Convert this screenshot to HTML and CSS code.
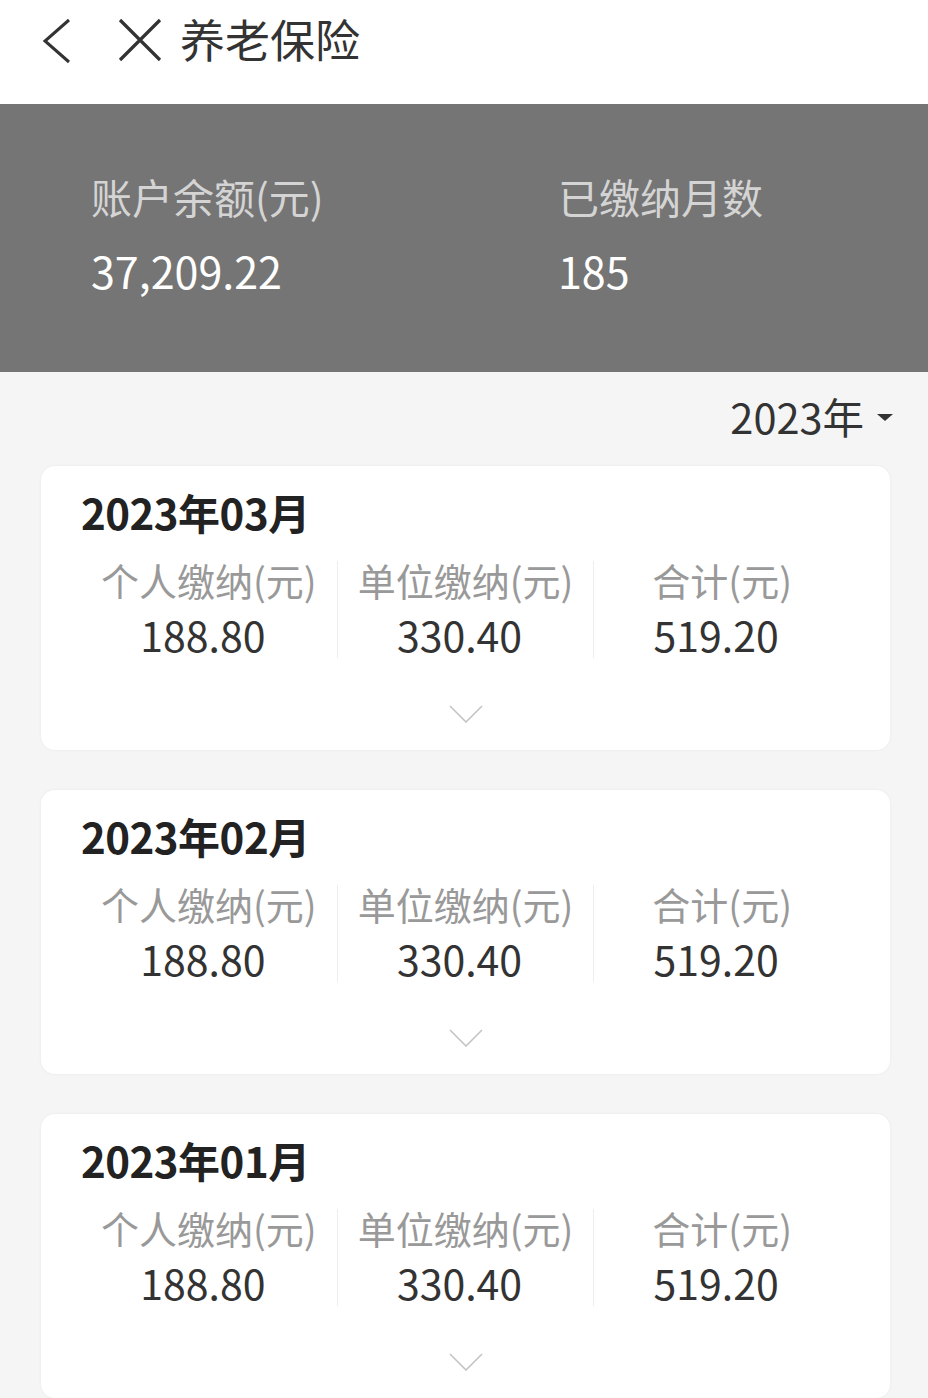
FILE: index.html
```html
<!DOCTYPE html>
<html lang="zh-CN">
<head>
    <meta charset="UTF-8">
    <meta name="viewport" content="width=device-width, initial-scale=1.0">
    <title>养老保险</title>
    <link rel="stylesheet" href="styles.css">
</head>
<body>
    <div class="top-bar">
        <svg class="icon-back" width="30" height="46" viewBox="0 0 30 46">
            <polyline points="27,2 3,23 27,44" fill="none" stroke="#333" stroke-width="3"/>
        </svg>
        <svg class="icon-close" width="44" height="44" viewBox="0 0 44 44">
            <path d="M2 2 L42 42 M42 2 L2 42" fill="none" stroke="#333" stroke-width="3.2"/>
        </svg>
        <div class="page-title">养老保险</div>
    </div>

    <div class="summary">
        <div class="summary-item summary-balance">
            <div class="summary-label">账户余额(元)</div>
            <div class="summary-value">37,209.22</div>
        </div>
        <div class="summary-item">
            <div class="summary-label">已缴纳月数</div>
            <div class="summary-value">185</div>
        </div>
    </div>

    <div class="year-row">
        <div class="year-picker">2023年<span class="caret"></span></div>
    </div>

    <div class="card-list">
        <div class="card">
            <div class="card-title">2023年03月</div>
            <div class="stats">
                <div class="stat">
                    <div class="stat-label">个人缴纳(元)</div>
                    <div class="stat-value">188.80</div>
                </div>
                <div class="stat">
                    <div class="stat-label">单位缴纳(元)</div>
                    <div class="stat-value">330.40</div>
                </div>
                <div class="stat">
                    <div class="stat-label">合计(元)</div>
                    <div class="stat-value">519.20</div>
                </div>
            </div>
            <svg class="expand" width="34" height="18" viewBox="0 0 34 18">
                <polyline points="1,1 17,17 33,1" fill="none" stroke="#c4c4c4" stroke-width="1.6"/>
            </svg>
        </div>

        <div class="card">
            <div class="card-title">2023年02月</div>
            <div class="stats">
                <div class="stat">
                    <div class="stat-label">个人缴纳(元)</div>
                    <div class="stat-value">188.80</div>
                </div>
                <div class="stat">
                    <div class="stat-label">单位缴纳(元)</div>
                    <div class="stat-value">330.40</div>
                </div>
                <div class="stat">
                    <div class="stat-label">合计(元)</div>
                    <div class="stat-value">519.20</div>
                </div>
            </div>
            <svg class="expand" width="34" height="18" viewBox="0 0 34 18">
                <polyline points="1,1 17,17 33,1" fill="none" stroke="#c4c4c4" stroke-width="1.6"/>
            </svg>
        </div>

        <div class="card">
            <div class="card-title">2023年01月</div>
            <div class="stats">
                <div class="stat">
                    <div class="stat-label">个人缴纳(元)</div>
                    <div class="stat-value">188.80</div>
                </div>
                <div class="stat">
                    <div class="stat-label">单位缴纳(元)</div>
                    <div class="stat-value">330.40</div>
                </div>
                <div class="stat">
                    <div class="stat-label">合计(元)</div>
                    <div class="stat-value">519.20</div>
                </div>
            </div>
            <svg class="expand" width="34" height="18" viewBox="0 0 34 18">
                <polyline points="1,1 17,17 33,1" fill="none" stroke="#c4c4c4" stroke-width="1.6"/>
            </svg>
        </div>
    </div>
</body>
</html>
```

FILE: styles.css
```css
body {
    margin: 0;
    background-color: #f5f5f5;
    font-family: "Noto Sans CJK SC", "Noto Sans", sans-serif;
    color: #333;
}
.top-bar {
    height: 104px;
    background-color: #fff;
    display: flex;
    align-items: flex-start;
    box-sizing: border-box;
    padding-top: 18px;
}
.icon-back {
    margin-left: 42px;
    display: block;
}
.icon-close {
    margin-left: 46px;
    display: block;
}
.page-title {
    margin-left: 18px;
    font-size: 45px;
    line-height: 45px;
    color: #333;
    margin-top: -2px;
}
.summary {
    background-color: #757575;
    display: flex;
    padding: 72px 0 81px 91px;
}
.summary-item {
    flex-shrink: 0;
}
.summary-balance {
    width: 467px;
}
.summary-label {
    font-size: 41px;
    line-height: 40px;
    color: #d4d4d4;
}
.summary-value {
    font-size: 43px;
    line-height: 42px;
    color: #fff;
    margin-top: 33px;
}
.year-row {
    display: flex;
    justify-content: flex-end;
    padding: 24px 35px 0 0;
}
.year-picker {
    font-size: 41.5px;
    line-height: 40px;
    color: #333;
    display: flex;
    align-items: center;
}
.caret {
    width: 0;
    height: 0;
    border-left: 8px solid transparent;
    border-right: 8px solid transparent;
    border-top: 7px solid #333;
    margin-left: 13px;
    margin-top: 2px;
}
.card-list {
    padding: 30px 38px 0 41px;
    display: flex;
    flex-direction: column;
    gap: 40px;
}
.card {
    background-color: #fff;
    border-radius: 14px;
    box-shadow: 0 0 3px rgba(0, 0, 0, 0.06);
    padding: 25px 40px 27px 40px;
    display: flex;
    flex-direction: column;
}
.card-title {
    font-size: 42px;
    line-height: 42px;
    font-weight: bold;
    color: #222;
    letter-spacing: -0.5px;
}
.stats {
    display: flex;
    margin-top: 28px;
}
.stat {
    flex: 1;
    text-align: center;
    padding-bottom: 4px;
}
.stat + .stat {
    border-left: 1px solid #eeeeee;
}
.stat-label {
    font-size: 38px;
    line-height: 38px;
    color: #999;
}
.stat-value {
    font-size: 41px;
    line-height: 40px;
    color: #333;
    margin-top: 15px;
    padding-right: 12px;
}
.expand {
    display: block;
    align-self: center;
    margin-top: 47px;
}
```
